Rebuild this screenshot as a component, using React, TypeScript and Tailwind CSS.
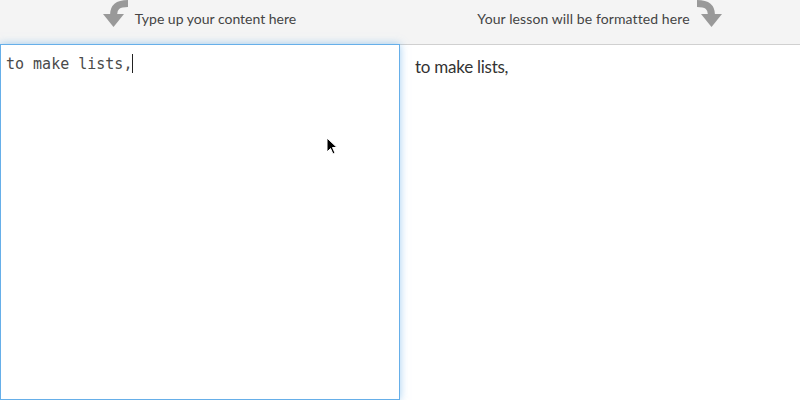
import React from "react";

function ArrowLeft() {
  return (
    <svg width="27" height="28" viewBox="0 0 27 28" className="shrink-0">
      <path d="M26 3.5 C16 3.5 11.5 7 11.5 15" fill="none" stroke="#999" strokeWidth="7" />
      <polygon points="1,14 22,14 11.5,27" fill="#999" />
    </svg>
  );
}

function ArrowRight() {
  return (
    <svg width="27" height="28" viewBox="0 0 27 28" className="shrink-0" style={{ transform: "scaleX(-1)" }}>
      <path d="M26 3.5 C16 3.5 11.5 7 11.5 15" fill="none" stroke="#999" strokeWidth="7" />
      <polygon points="1,14 22,14 11.5,27" fill="#999" />
    </svg>
  );
}

export default function App() {
  return (
    <div className="relative w-[800px] h-[400px] overflow-hidden bg-white" style={{ fontFamily: "Lato, 'Open Sans', sans-serif" }}>
      <div className="flex h-[44px] bg-[#f4f4f4]">
        <div className="flex w-[400px] items-start justify-center gap-[6px] pr-[2px]">
          <ArrowLeft />
          <span className="mt-[8px] text-[14px] text-[#444]">Type up your content here</span>
        </div>
        <div className="flex w-[400px] items-start justify-center gap-[6px]">
          <span className="mt-[8px] text-[14px] text-[#444] tracking-[0.1px]">Your lesson will be formatted here</span>
          <ArrowRight />
        </div>
      </div>
      <div className="flex h-[356px]">
        <div className="relative z-10 w-[400px] h-full border border-[#66afe9] bg-white shadow-[0_0_8px_rgba(102,175,233,0.6)] pl-[5px] pt-[9px]">
          <div className="text-[15px] leading-[20px] text-[#4a4a4a]" style={{ fontFamily: "'DejaVu Sans Mono', monospace" }}>
            to make lists,<span className="inline-block w-px h-[19px] bg-[#222] align-[-4px]" />
          </div>
        </div>
        <div className="flex-1 h-full border-t border-[#d0d0d0] bg-white pl-[15px] pt-[11px]">
          <div className="text-[17px] leading-[22px] text-[#333] tracking-[-0.25px]">to make lists,</div>
        </div>
      </div>
      <svg className="absolute z-20 left-[326px] top-[137px]" width="14" height="20" viewBox="0 0 14 20">
        <path d="M1 1 L1 15 L4.5 11.5 L7 17 L9 16 L6.5 10.5 L11 10.5 Z" fill="#000" stroke="#fff" strokeWidth="1" />
      </svg>
    </div>
  );
}
